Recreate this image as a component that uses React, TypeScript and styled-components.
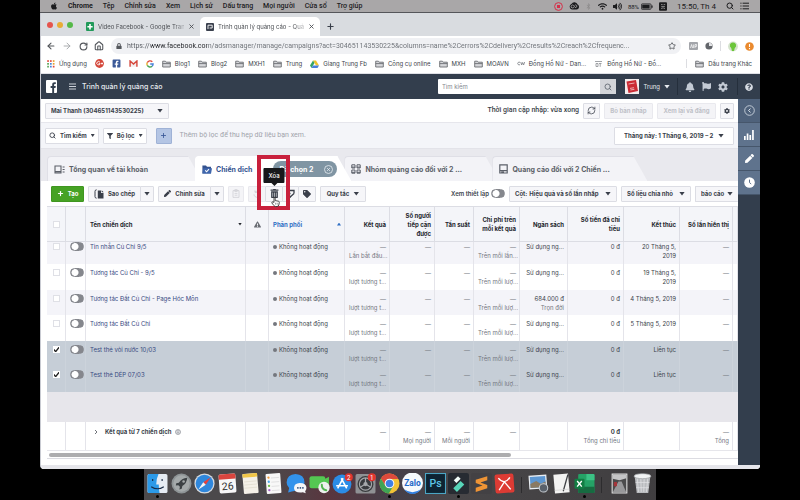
import React from "react";
import styled, { createGlobalStyle, css } from "styled-components";
import {
  FaApple, FaBell, FaBluetoothB, FaCog, FaExclamationTriangle, FaFacebookSquare, FaFilter, FaFlag,
  FaLock, FaPen, FaQuestionCircle, FaTag, FaTrashAlt, FaVolumeUp, FaWifi,
} from "react-icons/fa";
import { ArrowLeft, ArrowRight, House, Plus, RefreshCw, RotateCw, Search, Star, X } from "lucide-react";

const ink = "#3a3f4a";
const navy = "#333e4d";
const line = "#dcdde4";
const roboto = `Roboto, "Liberation Sans", sans-serif`;

const Global = createGlobalStyle`
  *, *::before, *::after { box-sizing: border-box; }
  body { margin: 0; background: #000; }
  body, button, input, select { font-family: Inter, "Liberation Sans", sans-serif; }
  body { font-size: 6px; line-height: 9px; color: ${ink}; }
  button, input, select { font-size: inherit; line-height: inherit; color: inherit; margin: 0; padding: 0; border: 0; background: none; }
  a { color: inherit; text-decoration: none; }
  svg { display: block; flex: none; }
`;

const Screen = styled.div`
  min-height: 100vh;
  padding: 0 5%;
  background: #000;
  overflow: hidden;
  display: flex;
  flex-direction: column;
`;

/* ---------- system menu bar ---------- */

const MenuBar = styled.header`
  height: 13px;
  display: flex;
  align-items: center;
  justify-content: space-between;
  padding: 0 11px 0 10px;
  background: #a9a7a8;
  border-bottom: 1px solid #55565a;
  color: #1c1c1e;
  font-family: ${roboto};
  font-size: 7px;
`;
const MenuGroup = styled.nav`
  display: flex;
  align-items: center;
  gap: 10px;
`;
const MenuItem = styled.button<{ $strong?: boolean }>`
  font-family: inherit;
  font-weight: ${(p) => (p.$strong ? 700 : 500)};
  white-space: nowrap;
`;
const StatusGroup = styled.div`
  display: flex;
  align-items: center;
  gap: 6px;
`;
const Battery = styled.span`
  display: flex;
  align-items: center;
  gap: 2px;
  font-size: 6px;
`;
const Clock = styled.span`
  padding: 0 4px;
  font-size: 8px;
`;

/* ---------- browser window ---------- */

const Window = styled.div`
  background: #e6e6eb;
  border-radius: 0 0 4px 4px;
  overflow: hidden;
  border-left: 1px solid #c9cbd2;
`;
const TabStrip = styled.div`
  height: 23px;
  display: flex;
  align-items: flex-end;
  background: #d9dce0;
  padding-left: 5px;
`;
const Lights = styled.div`
  display: flex;
  gap: 4px;
  align-self: center;
  padding: 0 7px 0 1px;
`;
const Light = styled.span<{ $color: string }>`
  width: 6px;
  height: 6px;
  border-radius: 50%;
  background: ${(p) => p.$color};
`;
const BrowserTab = styled.div<{ $active?: boolean }>`
  height: 19px;
  flex: 0 1 120px;
  min-width: 0;
  display: flex;
  align-items: center;
  gap: 4px;
  padding: 0 5px 0 6px;
  border-radius: 5px 5px 0 0;
  background: ${(p) => (p.$active ? "#fff" : "transparent")};
  color: #4a4d52;
`;
const TabTitle = styled.button`
  flex: 1;
  min-width: 0;
  white-space: nowrap;
  text-align: left;
  mask-image: linear-gradient(90deg, #000 88%, rgba(0, 0, 0, 0.3));
`;
const IconButton = styled.button`
  display: flex;
  align-items: center;
  justify-content: center;
`;
const NewTab = styled(IconButton)`
  height: 19px;
  padding: 0 6px;
`;
const AddressRow = styled.div`
  height: 20px;
  display: flex;
  align-items: center;
  background: #fff;
  padding: 0 6px 0 5px;
`;
const NavButtons = styled.div`
  display: flex;
  gap: 6px;
  padding-right: 7px;
  color: #55585d;
`;
const NavButton = styled(IconButton)`
  width: 10px;
  height: 10px;
`;
const Omnibox = styled.div`
  flex: 1;
  min-width: 0;
  height: 16px;
  border-radius: 8px;
  background: #f0f1f4;
  display: flex;
  align-items: center;
  gap: 5px;
  padding: 0 5px;
  color: #55585d;
`;
const UrlInput = styled.input`
  flex: 1;
  min-width: 0;
  font-family: ${roboto};
  font-size: 7px;
  color: transparent;
  background: linear-gradient(90deg, #55595f 24px, #202226 24px, #202226 80px, #6b6f75 80px);
  background-clip: text;
`;
const Extensions = styled.div`
  display: flex;
  align-items: center;
  gap: 7px;
  padding-left: 8px;
`;
const VRule = styled.span<{ $color: string; $h: number }>`
  width: 1px;
  height: ${(p) => p.$h}px;
  background: ${(p) => p.$color};
`;
const Bookmarks = styled.nav`
  height: 18px;
  display: flex;
  align-items: center;
  justify-content: space-between;
  gap: 6px;
  padding: 0 8px 2px 6px;
  background: #fff;
  white-space: nowrap;
  border-bottom: 1px solid #dfe0e6;
`;
const BookmarkList = styled.div`
  display: flex;
  align-items: center;
  gap: 8px;
`;
const Bookmark = styled.a`
  display: flex;
  align-items: center;
  gap: 4px;
`;

/* ---------- ads manager header ---------- */

const AppBar = styled.header`
  height: 25px;
  display: flex;
  align-items: center;
  background: ${navy};
  color: #e8ebf0;
  padding-left: 5px;
`;
const AppTitle = styled.h1`
  flex: 1;
  margin: 0;
  font-size: 7px;
  line-height: 9px;
  font-weight: 500;
`;
const Hamburger = styled(IconButton)`
  padding: 0 6px 0 12px;
`;
const SearchForm = styled.form`
  width: 25%;
  height: 15px;
  display: flex;
  border-radius: 1px;
  overflow: hidden;
  background: #fff;
  color: #606770;
`;
const SearchInput = styled.input`
  flex: 1;
  min-width: 0;
  padding: 0 4px;
  &::placeholder { color: #85888f; opacity: 1; }
`;
const SearchSubmit = styled(IconButton)`
  width: 16px;
  background: #d3d5d9;
`;
const UserButton = styled.button`
  display: flex;
  align-items: center;
  gap: 4px;
  padding: 0 7px 0 9px;
`;
const AppIcons = styled.div`
  display: flex;
  align-items: center;
  gap: 7px;
  padding: 0 9px 0 7px;
  color: #c3cad4;
`;
const HelpCell = styled.div`
  width: 22px;
  display: flex;
  justify-content: center;
  color: #d6dbe2;
`;

/* ---------- work area ---------- */

const Work = styled.div`
  display: flex;
  align-items: stretch;
  background: #fff;
  border-bottom: 4px solid #e6e6eb;
`;
const Main = styled.main`
  flex: 1;
  min-width: 0;
`;
const Side = styled.aside`
  width: 22px;
  background: ${navy};
  display: flex;
  flex-direction: column;
`;
const SideButton = styled(IconButton)<{ $dim?: boolean }>`
  height: 24px;
  background: ${(p) => (p.$dim ? "#4f627b" : "#5f738d")};
  border-bottom: 1px solid #46566b;
  color: #fff;
`;
const Bar = styled.div<{ $tint?: boolean }>`
  display: flex;
  align-items: center;
  justify-content: space-between;
  height: ${(p) => (p.$tint ? 26 : 24)}px;
  padding: 0 4px;
  background: ${(p) => (p.$tint ? "#f4f5f9" : "#fff")};
  border-bottom: 1px solid ${(p) => (p.$tint ? "#e3e3e9" : "#e6e6ec")};
`;
const BarGroup = styled.div`
  display: flex;
  align-items: center;
  gap: 4px;
`;
const boxed = css`
  height: 16px;
  border: 1px solid ${line};
  border-radius: 1px;
  background: #f6f6f9;
  font-weight: 700;
  white-space: nowrap;
`;
const BoxButton = styled.button<{ $w?: number; $tone?: "white" | "green" | "blue" }>`
  ${boxed}
  display: flex;
  align-items: center;
  justify-content: center;
  gap: 4px;
  min-width: ${(p) => p.$w ?? 16}px;
  padding: 0 3px;
  ${(p) => p.$tone === "white" && "background:#fff;"}
  ${(p) => p.$tone === "green" && "background:#46a224;border-color:#3f9620;color:#fff;"}
  ${(p) => p.$tone === "blue" && "background:#b4c5e4;border-color:#9fb2d6;color:#3b5998;"}
  &:disabled { color: #bfc1c8; background: #f4f4f7; border-color: #e9e9ee; }
`;
const SelectBox = styled.label<{ $w: number; $white?: boolean; $open?: boolean }>`
  ${boxed}
  width: ${(p) => p.$w}px;
  display: flex;
  align-items: center;
  gap: 2px;
  padding: 0 5px;
  ${(p) => p.$white && "background:#fff;height:18px;padding:0 9px;"}
  ${(p) => p.$open && "border-right:0;"}
`;
const Select = styled.select`
  appearance: none;
  flex: 1;
  min-width: 0;
  font-weight: 700;
  overflow: hidden;
`;
const Caret = styled.span<{ $up?: boolean }>`
  flex: none;
  width: 6px;
  height: 4px;
  background: currentColor;
  clip-path: ${(p) => (p.$up ? "polygon(0 100%, 50% 0, 100% 100%)" : "polygon(0 0, 100% 0, 50% 100%)")};
`;
const SmallCaret = styled(Caret)`
  width: 4px;
  height: 3px;
`;
const Hint = styled.span`
  padding-left: 4px;
  font-family: ${roboto};
  font-size: 7px;
  color: #a0a3ab;
`;
const Updated = styled.span`
  font-family: ${roboto};
  font-size: 7px;
  font-weight: 500;
`;

const LevelTabs = styled.div`
  display: flex;
  padding: 7px 0 0 6px;
  background: #e9e9ee;
`;
const LevelTab = styled.div<{ $active?: boolean }>`
  flex: 0 1 155px;
  height: 25px;
  display: flex;
  align-items: center;
  padding: 0 14px 0 6px;
  border-radius: 4px 0 0 0;
  clip-path: polygon(0 0, calc(100% - 14px) 0, 100% 100%, 0 100%);
  background: ${(p) => (p.$active ? "#fff" : "#f3f3f7")};
  border-top: 1px solid ${(p) => (p.$active ? "#fff" : "#dfdfe6")};
  border-left: 1px solid ${(p) => (p.$active ? "#fff" : "#dfdfe6")};
  color: ${(p) => (p.$active ? "#33528f" : "#5b5f68")};
  position: relative;
  z-index: ${(p) => (p.$active ? 1 : 0)};
  & + & { margin-left: -7px; }
`;
const LevelButton = styled.button`
  display: flex;
  align-items: center;
  gap: 4px;
  font-size: 7px;
  font-weight: 700;
  white-space: nowrap;
`;
const Pill = styled.span`
  flex: none;
  margin-left: 21px;
  width: 64px;
  height: 16px;
  border-radius: 8px;
  background: #8095a3;
  color: #fff;
  display: flex;
  align-items: center;
  justify-content: space-between;
  padding: 0 4px 0 6px;
  font-size: 7px;
  font-weight: 700;
`;
const Panel = styled.section`
  margin-left: 6px;
`;
const Toolbar = styled.div`
  height: 25px;
  display: flex;
  align-items: center;
  justify-content: space-between;
  padding-left: 4px;
`;
const Split = styled.div`
  display: flex;
  & > * + * { margin-left: -1px; }
`;
const DeleteSpot = styled.div`
  position: relative;
  z-index: 3;
`;
const Tooltip = styled.span`
  position: absolute;
  left: 50%;
  bottom: 100%;
  transform: translateX(-50%);
  margin-bottom: 3px;
  padding: 3px 5px;
  border-radius: 1px;
  background: #17181b;
  color: #fff;
  font-weight: 500;
  &::after {
    content: "";
    position: absolute;
    left: 50%;
    top: 100%;
    margin-left: -3px;
    border: 3px solid transparent;
    border-bottom: 0;
    border-top-color: #17181b;
  }
`;
const Marker = styled.span`
  position: absolute;
  inset: -31px -7px -8px -8px;
  border: 4px solid #c8203c;
  pointer-events: none;
`;
const Pointer = styled.svg`
  position: absolute;
  left: 6px;
  top: 11px;
`;
const SwitchLabel = styled.label`
  display: flex;
  align-items: center;
  gap: 2px;
  font-weight: 600;
`;
const Switch = styled.input`
  appearance: none;
  display: block;
  width: 14px;
  height: 9px;
  border-radius: 5px;
  background: radial-gradient(circle at 4px 50%, #fff 3px, #85878d 4px);
  border: 1px solid #85878d;
`;
const Check = styled.input`
  appearance: none;
  display: block;
  width: 7px;
  height: 7px;
  margin: 1px auto 0;
  border: 1px solid #dfe0e6;
  background: #fff;
  &:checked {
    border-color: #fff;
    background: #fff
      url("data:image/svg+xml,%3Csvg xmlns='http://www.w3.org/2000/svg' viewBox='0 0 8 8'%3E%3Cpath d='M1 4l2 2.4L7 1.4' fill='none' stroke='%23222' stroke-width='1.5'/%3E%3C/svg%3E")
      center / 7px no-repeat;
  }
`;

const Grid = styled.table`
  width: 100%;
  table-layout: fixed;
  border-collapse: separate;
  border-spacing: 0;
  white-space: nowrap;
`;
const Col = styled.col<{ $w?: number }>`
  width: ${(p) => (p.$w ? `${p.$w}px` : "auto")};
`;
const Th = styled.th<{ $left?: boolean; $blue?: boolean }>`
  height: 36px;
  padding: 0 3px 0 4px;
  background: #f4f5f9;
  border-top: 1px solid ${line};
  border-bottom: 1px solid ${line};
  border-right: 1px solid ${line};
  white-space: normal;
  text-align: ${(p) => (p.$left ? "left" : "right")};
  color: ${(p) => (p.$blue ? "#2f6fc4" : "#23262d")};
  font-weight: 700;
`;
const HeadLine = styled.span`
  display: flex;
  align-items: center;
  justify-content: space-between;
`;
const Row = styled.tr<{ $kind: "clip" | "odd" | "even" | "total"; $selected?: boolean }>`
  & > td {
    height: ${(p) => ({ clip: 22, odd: 26, even: 25, total: 28 }[p.$kind])}px;
    padding: ${(p) => (p.$kind === "clip" ? 0 : p.$kind === "total" ? 5 : 4)}px 3px 0 4px;
    background: ${(p) => (p.$selected ? "#c6ced7" : p.$kind === "even" || p.$kind === "clip" ? "#f4f4f9" : "#fff")};
    border-right: 1px solid ${(p) => (p.$selected ? "#ccd3db" : "#e4e4ea")};
    vertical-align: top;
    text-align: right;
  }
`;
const LeftCell = styled.td`
  && { text-align: left; }
`;
const Sub = styled.span`
  display: block;
  color: #74777f;
`;
const Dash = styled.span`
  color: #74777f;
`;
const NameLink = styled.a`
  color: #37497f;
`;
const State = styled.span`
  display: flex;
  align-items: center;
  gap: 2px;
`;
const Dot = styled.span`
  width: 4px;
  height: 4px;
  border-radius: 50%;
  background: #74777e;
`;
const Filler = styled.td`
  height: 30px;
  background: #e7e6eb;
`;
const TotalName = styled.span`
  display: flex;
  align-items: center;
  gap: 4px;
  padding-left: 3px;
  font-weight: 700;
`;
const Expand = styled(IconButton)`
  width: 6px;
  margin-right: 2px;
  color: #70737a;
`;
const Wrap = styled.span`
  white-space: normal;
`;
const Scroll = styled.div`
  height: 9px;
  padding: 2px 0 0 2px;
  border-top: 1px solid #e6e6eb;
  border-bottom: 1px solid #dcdce2;
  margin-bottom: 6px;
`;
const Thumb = styled.div`
  width: 67%;
  height: 4px;
  border-radius: 2px;
  background: #adadaf;
`;

/* ---------- dock ---------- */

const DockArea = styled.footer`
  flex: 1;
  display: flex;
  justify-content: center;
  align-items: flex-end;
`;
const Dock = styled.div`
  width: 71%;
  height: 31px;
  display: flex;
  align-items: center;
  padding: 0 2px;
  background: linear-gradient(90deg, #4b494b 0, #4b494b 24%, #59363f 36%, #463f49 48%, #484648 62%, #403e40 100%);
`;
const DockSlot = styled.button`
  flex: 1;
  display: flex;
  flex-direction: column;
  align-items: center;
  gap: 1px;
  padding-top: 2px;
`;
const DockDot = styled.span<{ $on?: boolean }>`
  width: 3px;
  height: 3px;
  border-radius: 50%;
  background: ${(p) => (p.$on ? "#000" : "transparent")};
`;
const DockRule = styled.span`
  width: 1px;
  height: 16px;
  margin: 0 5px;
  background: #2d2c2e;
`;

/* ---------- small drawings ---------- */

const Folder = () => (
  <svg width="9" height="8" viewBox="0 0 9 8" fill="#d5d6d9" stroke="#6b6e73" strokeWidth="0.9">
    <path d="M0.7 7V1.2H3.4L4.2 2.2H8.3V7Z" />
    <path d="M0.7 3.6H8.3" />
  </svg>
);
const Sheets = () => (
  <svg width="8" height="9" viewBox="0 0 8 9">
    <rect width="8" height="9" rx="1" fill="#229a5a" />
    <path d="M4 2V7.4M1.4 4.7H6.6" stroke="#fff" strokeWidth="1.6" />
  </svg>
);
const AdsMark = () => (
  <svg width="8" height="8" viewBox="0 0 8 8">
    <rect width="8" height="8" rx="1" fill="#3b414e" />
    <path d="M2 6V2.2H6.2V5H3.6" fill="none" stroke="#fff" strokeWidth="0.9" />
  </svg>
);
const Apps = () => (
  <svg width="8" height="8" viewBox="0 0 8 8">
    {["#e0483c", "#e0483c", "#e8a22b", "#58a557", "#4a83d8", "#e8a22b", "#58a557", "#4a83d8", "#e0483c"].map((c, i) => (
      <rect key={i} x={(i % 3) * 2.8 + 0.2} y={Math.floor(i / 3) * 2.8 + 0.2} width="1.7" height="1.7" fill={c} />
    ))}
  </svg>
);
const GooglePlus = () => (
  <svg width="9" height="9" viewBox="0 0 9 9">
    <circle cx="4.5" cy="4.5" r="4.4" fill="#d4483b" />
    <path d="M5 3.3A1.7 1.7 0 1 0 5.2 4.6H3.6M6.1 4.5H8M7 3.5V5.5" fill="none" stroke="#fff" strokeWidth="0.9" />
  </svg>
);
const Gmail = () => (
  <svg width="9" height="7" viewBox="0 0 9 7">
    <rect x="0.5" y="0.4" width="8" height="6.3" fill="#f3eeee" />
    <path d="M1.1 6.7V1L4.5 4L7.9 1V6.7" fill="none" stroke="#d6473b" strokeWidth="1.4" />
  </svg>
);
const GoogleG = () => (
  <svg width="8" height="8" viewBox="0 0 8 8" fill="none" strokeWidth="1.4">
    <path d="M6.3 1.8A3.1 3.1 0 0 0 1.3 2.6" stroke="#e0483c" />
    <path d="M1.3 2.6A3.1 3.1 0 0 0 1.3 5.4" stroke="#e8b02b" />
    <path d="M1.3 5.4A3.1 3.1 0 0 0 6.1 6.2" stroke="#4aa557" />
    <path d="M6.1 6.2A3.1 3.1 0 0 0 7.1 4H4.2" stroke="#4a83d8" />
  </svg>
);
const Drive = () => (
  <svg width="9" height="8" viewBox="0 0 9 8">
    <path d="M3 0.5H6L9 5.5H6Z" fill="#f2c32c" />
    <path d="M3 0.5L0 5.5L1.5 8L4.5 3Z" fill="#35a366" />
    <path d="M3 5.5H9L7.5 8H1.5Z" fill="#4a7fdc" />
  </svg>
);
const Watch = () => (
  <svg width="9" height="8" viewBox="0 0 9 8" fill="none" stroke="#8b8e93" strokeWidth="0.8">
    <path d="M1 1.5H8M2 3.5H4V6.5H2ZM5 3.5H7.5M6.2 3.5V6.8" />
  </svg>
);
const CwMark = () => (
  <svg width="8" height="5" viewBox="0 0 8 5" fill="none" stroke="#85888d" strokeWidth="0.9">
    <path d="M3 1.4A1.4 1.4 0 1 0 3 3.6M3.8 1L4.6 4L5.6 1.5L6.6 4L7.6 1" />
  </svg>
);
const Record = () => (
  <svg width="9" height="9" viewBox="0 0 9 9">
    <circle cx="4.5" cy="4.5" r="3.9" fill="none" stroke="#d5304a" />
    <rect x="3" y="3" width="3" height="3" fill="#d5304a" />
  </svg>
);
const Cloud = () => (
  <svg width="10" height="8" viewBox="0 0 10 8">
    <path d="M3 7.5A2.9 2.9 0 0 1 2.4 2A3.4 3.4 0 0 1 8.6 2.6A2.6 2.6 0 0 1 7.6 7.5Z" fill="#1c1c1e" />
    <path d="M5 4.8A1.5 1.5 0 1 1 4.4 3.3L6 5.4A1.3 1.3 0 1 0 5.6 3.4" fill="none" stroke="#a9a7a8" strokeWidth="0.8" />
  </svg>
);
const BatteryIcon = () => (
  <svg width="12" height="7" viewBox="0 0 12 7">
    <rect x="0.4" y="0.9" width="9.6" height="5.4" rx="0.8" fill="none" stroke="#1c1c1e" strokeWidth="0.8" />
    <rect x="1.2" y="1.7" width="7.4" height="3.8" fill="#1c1c1e" />
    <path d="M11 2.4V4.8" stroke="#1c1c1e" strokeWidth="1.2" />
  </svg>
);
const InputSource = () => (
  <svg width="8" height="9" viewBox="0 0 8 9">
    <rect y="0.3" width="8" height="8.4" rx="1" fill="#1c1c1e" />
    <path d="M2 2.5H3.6M4.6 2.5H6.2M2.2 4.4H6M4 4.4V7M2.6 5.8V7M5.5 5.8V7" stroke="#a9a7a8" strokeWidth="0.7" />
  </svg>
);
const ListIcon = () => (
  <svg width="9" height="8" viewBox="0 0 9 8" stroke="#1c1c1e">
    <path d="M2.6 1.2H9M2.6 4H9M2.6 6.8H9M0.4 1.2H1.5M0.4 4H1.5M0.4 6.8H1.5" />
  </svg>
);
const Lines = () => (
  <svg width="7" height="7" viewBox="0 0 7 7" stroke="#dfe3e9">
    <path d="M0 1H7M0 3.5H7M0 6H7" strokeWidth="0.9" />
  </svg>
);
const FbLogo = () => (
  <svg width="11" height="13" viewBox="0 0 11 13">
    <rect width="11" height="13" rx="1" fill="#fff" />
    <path d="M6.2 13V8H4.6V6.1H6.2V4.6C6.2 3 7.2 2.2 8.6 2.2H9.8V4H8.9C8.3 4 8.1 4.3 8.1 4.8V6.1H9.8L9.5 8H8.1V13Z" fill={navy} />
  </svg>
);
const Avatar = () => (
  <svg width="14" height="15" viewBox="0 0 14 15">
    <rect width="14" height="15" fill="#f3ecec" />
    <path d="M1.5 2.5L11 1L13 12L3.5 14Z" fill="#cb2a33" />
    <path d="M3.5 5L9.5 4M5 9.4L9 8.7M5.4 11L9.4 10.3" stroke="#f3c9c9" strokeWidth="0.8" />
  </svg>
);
const CopyIcon = () => (
  <svg width="10" height="10" viewBox="0 0 10 10">
    <path d="M2.6 0.8Q1 0.8 1 2.4V7.6Q1 9.2 2.6 9.2" fill="none" stroke={ink} strokeWidth="1" />
    <path d="M3.8 1.5H7V4H9.5V9.5H3.8Z" fill={ink} />
    <path d="M7.7 1.3L9.7 3.3H7.7Z" fill={ink} />
  </svg>
);
const PasteIcon = () => (
  <svg width="8" height="9" viewBox="0 0 8 9" fill="none" stroke="#d2d3d8" strokeWidth="0.9">
    <path d="M1 1.6H7V8.4H1ZM2.8 0.7H5.2V2.4H2.8ZM2.6 4.4H5.4M2.6 6.2H5.4" />
  </svg>
);
const UndoIcon = () => (
  <svg width="8" height="8" viewBox="0 0 8 8" fill="none" stroke="#d2d3d8" strokeWidth="1">
    <path d="M2 2A3 3 0 1 1 1 4.4M2 0.4V2.4H4" />
  </svg>
);
const ExportIcon = () => (
  <svg width="9" height="9" viewBox="0 0 9 9" fill="none" stroke={ink} strokeWidth="1.3">
    <path d="M1 1.5H8V4.5M1 1.5V4.5H4.5M4.2 8L8 4.5M5 8.2H3.6V6.4" />
  </svg>
);
const OverviewIcon = () => (
  <svg width="11" height="9" viewBox="0 0 11 9" fill="none" stroke="#5b5f68" strokeWidth="1.1">
    <path d="M1 1H7V8H1ZM1 6.6H7M8.6 2H10.6M8.6 4.5H10.6M8.6 7H10.6" />
  </svg>
);
const CampaignIcon = () => (
  <svg width="10" height="9" viewBox="0 0 10 9">
    <path d="M0.4 8.6V0.6H4L5 1.8H9V8.6Z" fill="#33528f" />
    <path d="M1.4 3.2H10L9 8.6H0.4Z" fill="#3f66ad" />
    <path d="M3.2 5.4L4.6 6.8L7 4.2" fill="none" stroke="#fff" strokeWidth="1.1" />
  </svg>
);
const AdSetIcon = () => (
  <svg width="10" height="10" viewBox="0 0 10 10" fill="none" stroke="#5b5f68" strokeWidth="1">
    <path d="M0.8 0.8H4V4H0.8ZM6 0.8H9.2V4H6ZM0.8 6H4V9.2H0.8ZM6 6H9.2V9.2H6ZM0.8 3.1H4M6 3.1H9.2M0.8 8.3H4M6 8.3H9.2" />
  </svg>
);
const AdIcon = () => (
  <svg width="9" height="10" viewBox="0 0 9 10" fill="none" stroke="#5b5f68" strokeWidth="1.2">
    <path d="M0.8 0.8H8.2V9H0.8ZM0.8 6.7H8.2M2.2 8H5" />
  </svg>
);
const CircleX = () => (
  <svg width="9" height="9" viewBox="0 0 9 9" fill="none" stroke="#e9eef2" strokeWidth="0.8">
    <circle cx="4.5" cy="4.5" r="4" />
    <path d="M3.1 3.1L5.9 5.9M5.9 3.1L3.1 5.9" />
  </svg>
);
const Collapse = () => (
  <svg width="11" height="11" viewBox="0 0 11 11" fill="none" stroke="#dbe2ea">
    <circle cx="5.5" cy="5.5" r="4.8" strokeWidth="0.8" />
    <path d="M6.5 3.6L4.5 5.5L6.5 7.4" />
  </svg>
);
const Bars = () => (
  <svg width="10" height="11" viewBox="0 0 10 11" fill="#fff">
    <path d="M0 7H1.7V11H0ZM2.7 4.5H4.4V11H2.7ZM5.4 6H7.1V11H5.4ZM8.1 1H9.8V11H8.1Z" />
  </svg>
);
const ClockIcon = () => (
  <svg width="11" height="11" viewBox="0 0 11 11">
    <circle cx="5.5" cy="5.5" r="5.3" fill="#fff" />
    <path d="M5.5 2.6V5.6L7.2 7" fill="none" stroke="#5f738d" />
  </svg>
);
const Chevron = () => (
  <svg width="4" height="6" viewBox="0 0 4 6" fill="none" stroke="currentColor">
    <path d="M1 1L3 3L1 5" />
  </svg>
);
const Info = () => (
  <svg width="6" height="6" viewBox="0 0 6 6">
    <circle cx="3" cy="3" r="2.5" fill="#dfe0e4" stroke="#8c8f96" strokeWidth="0.7" />
    <path d="M3 2.6V4.4M3 1.4V2" stroke="#70737a" strokeWidth="0.7" />
  </svg>
);
const Hand = () => (
  <Pointer width="9" height="10" viewBox="0 0 9 10">
    <path
      d="M3 5.4V1.2Q3 0.5 3.6 0.5T4.2 1.2V3.6L7.4 4.2Q8.4 4.4 8.3 5.4L7.8 8Q7.5 9.5 6 9.5H4.6Q3.6 9.5 3 8.7L0.9 6Q0.5 5.3 1.2 5T3 5.4Z"
      fill="#fff" stroke="#222" strokeWidth="0.8"
    />
    <path d="M4.6 5.8V7.6M6.2 5.8V7.6" stroke="#555" strokeWidth="0.6" />
  </Pointer>
);

const dockArt: Record<string, React.ReactNode> = {
  Finder: (
    <>
      <rect x="0.5" y="1" width="19" height="18" rx="1.5" fill="#e6ecf3" />
      <path d="M0.5 2.5Q0.5 1 2 1H11Q8.6 6 8.8 11H11.2Q11.2 15 12 19H2Q0.5 19 0.5 17.5Z" fill="#2c9ae8" />
      <path d="M5.4 5.6V7.6M14.4 5.6V7.6M4 13Q10 17 16 13" fill="none" stroke="#1b2c46" strokeWidth="1.1" />
    </>
  ),
  Launchpad: (
    <>
      <circle cx="10" cy="10" r="9.5" fill="#8e9496" />
      <circle cx="10" cy="10" r="7.8" fill="#a4a9aa" />
      <path d="M15.5 4.5Q10 5 7.5 9.3L5 9.8L4.6 12L7 11.6L8.5 13.2L8 15.6L10.2 15L10.8 12.4Q15 10 15.5 4.5Z" fill="#3c4144" />
      <circle cx="12" cy="8" r="1.2" fill="#a4a9aa" />
    </>
  ),
  Safari: (
    <>
      <circle cx="10" cy="10" r="9.6" fill="#d5dadf" />
      <circle cx="10" cy="10" r="8.4" fill="#2f87dc" />
      <path d="M16 4L11.2 11.2L8.8 8.8Z" fill="#e7413b" />
      <path d="M4 16L11.2 11.2L8.8 8.8Z" fill="#f4f5f6" />
    </>
  ),
  Calendar: (
    <g transform="rotate(-4 10 10)">
      <rect x="2" y="1" width="16" height="18" rx="1.5" fill="#f7f7f7" />
      <path d="M2 2.5Q2 1 3.5 1H16.5Q18 1 18 2.5V5.8H2Z" fill="#d9453e" />
      <text x="10" y="16" textAnchor="middle" fontSize="10" fontFamily="Roboto, sans-serif" fill="#333">26</text>
    </g>
  ),
  Notes: (
    <g transform="rotate(-5 10 10)">
      <rect x="3" y="0.5" width="14" height="19" rx="1" fill="#f4f1e8" />
      <path d="M3 0.5H17V4H3Z" fill="#f0c648" />
      <path d="M4 8H16M4 11H16M4 14H16" stroke="#ddd8ca" strokeWidth="0.6" />
    </g>
  ),
  Reminders: (
    <g transform="rotate(-4 10 10)">
      <rect x="3" y="0.5" width="14" height="19" rx="1" fill="#f8f8f8" />
      <circle cx="5.6" cy="4" r="1.1" fill="#f09a37" />
      <circle cx="5.6" cy="8" r="1.1" fill="#4aa7ea" />
      <circle cx="5.6" cy="12" r="1.1" fill="#6fc04f" />
      <circle cx="5.6" cy="16" r="1.1" fill="#a861c9" />
      <path d="M8 4.6H15.5M8 8.6H15.5M8 12.6H15.5M8 16.6H15.5" stroke="#d2d2d4" strokeWidth="0.6" />
    </g>
  ),
  Messages: (
    <>
      <path d="M9 1Q17.5 1.4 17.6 9Q17.4 16.6 9 16.8Q5.8 17.2 2 18.6L3 14.4Q0.6 12 0.6 9Q1 1.4 9 1Z" fill="#3393ec" />
      <path d="M13 9.5Q19.4 9.6 19.5 14Q19.4 16.4 18.2 17.2L18.8 19.4L16 18.4Q8 19.4 7.6 14.2Q8 9.7 13 9.5Z" fill="#f5f6f8" />
      <path d="M10.6 14.2H12M13 14.2H14.4M15.4 14.2H16.8" stroke="#3f5d86" strokeWidth="1.5" />
    </>
  ),
  FaceTime: (
    <>
      <rect x="0.5" y="3" width="15" height="11.5" rx="2" fill="#54c752" />
      <path d="M13 7L19 3.6V13.8L13 10.6Z" fill="#54c752" />
      <circle cx="14.3" cy="13.8" r="5.4" fill="#eef0ee" />
      <path d="M12.2 11.2Q12 15.6 16.4 16.4" fill="none" stroke="#54b552" strokeWidth="1.9" strokeLinecap="round" />
    </>
  ),
  "App Store": (
    <>
      <circle cx="9.5" cy="10.5" r="9" fill="#2b8ce6" />
      <path d="M10.6 5L5.4 14.6M8.8 5L14 14.6M4 12.2H15.2" stroke="#fff" strokeWidth="1.5" fill="none" />
      <circle cx="16" cy="4" r="3.8" fill="#e1352f" />
      <text x="16" y="6.2" textAnchor="middle" fontSize="6" fontFamily="Roboto, sans-serif" fill="#fff">2</text>
    </>
  ),
  Settings: (
    <>
      <rect x="0.5" y="1" width="19" height="18.5" rx="1.5" fill="#8f9194" />
      <circle cx="10" cy="10.5" r="7.6" fill="#393b3e" />
      <circle cx="10" cy="10.5" r="5.8" fill="none" stroke="#a6a8ab" strokeWidth="1.1" />
      <path d="M10 10.5V4.8M10 10.5L5 13.6M10 10.5L15 13.6" stroke="#a6a8ab" strokeWidth="1.2" />
      <circle cx="10" cy="10.5" r="2" fill="#a6a8ab" />
      <circle cx="16" cy="4" r="3.8" fill="#e1352f" />
      <text x="16" y="6.2" textAnchor="middle" fontSize="6" fontFamily="Roboto, sans-serif" fill="#fff">1</text>
    </>
  ),
  Chrome: (
    <>
      <circle cx="10" cy="10" r="9.5" fill="#f3c336" />
      <path d="M1.8 5.2A9.5 9.5 0 0 1 18.4 5.6H10L5.8 12Z" fill="#dd4a3c" />
      <path d="M1.8 5.2A9.5 9.5 0 0 0 9.4 19.5L13.6 12.4L6.2 12.4Z" fill="#3fa455" />
      <circle cx="10" cy="10" r="4.6" fill="#f6f6f6" />
      <circle cx="10" cy="10" r="3.6" fill="#3f7fe4" />
    </>
  ),
  Zalo: (
    <>
      <circle cx="10" cy="9.5" r="10" fill="#f6f9fc" />
      <path d="M2 15.5Q10 21 18 15.5Q15 20 10 20Q5 20 2 15.5Z" fill="#2f7fe0" />
      <text x="10" y="12.6" textAnchor="middle" fontSize="8" fontWeight="700" fontFamily="Roboto, sans-serif" fill="#1e68c8">Zalo</text>
    </>
  ),
  Photoshop: (
    <>
      <rect x="0.5" y="0.5" width="19" height="19" fill="#0e2433" stroke="#4ba5c4" />
      <text x="10" y="13.6" textAnchor="middle" fontSize="10" fontWeight="500" fontFamily="Roboto, sans-serif" fill="#5fc6e6">Ps</text>
    </>
  ),
  Filmora: (
    <>
      <rect width="20" height="20" rx="2" fill="#272b32" />
      <path d="M9.5 3L12 5.5L8 9.5L5.5 7Z" fill="#f4fffb" />
      <path d="M5 14.5L12 7.5L15.5 11L8.5 18Z" fill="#58d6b9" />
    </>
  ),
  Sublime: (
    <>
      <rect width="20" height="20" rx="2" fill="#434144" />
      <path d="M4.5 6.5L15.5 3V7L9 9L15.5 11.4V14.5L4.5 18V14L11 12L4.5 9.6Z" fill="#ef9435" />
    </>
  ),
  XMind: (
    <g transform="rotate(-4 10 10)">
      <rect x="1" y="1" width="18" height="18" rx="2" fill="#dd3b34" />
      <path d="M4.5 4.5Q10 12 15.5 4.5M4.5 16L10 8.4L15.5 16" fill="none" stroke="#fff" strokeWidth="1.3" />
    </g>
  ),
  Preview: (
    <g transform="rotate(-4 10 10)">
      <rect x="1" y="2" width="17" height="13" fill="#e9edf2" />
      <rect x="2.2" y="3.2" width="14.6" height="10.6" fill="#5d97d2" />
      <path d="M2.2 10L8 7.4L12 10.4L16.8 8.6V13.8H2.2Z" fill="#8a7a63" />
      <circle cx="14.5" cy="14.5" r="4" fill="#59616b" stroke="#c6ccd2" strokeWidth="1" />
    </g>
  ),
  TextEdit: (
    <g transform="rotate(-5 10 10)">
      <rect x="3" y="1" width="14" height="18" fill="#f3f3f2" />
      <path d="M16.8 2L11 17.5" stroke="#3e4044" strokeWidth="1.2" />
      <path d="M3 16H17" stroke="#cfcfcf" strokeWidth="0.6" />
    </g>
  ),
  Excel: (
    <>
      <rect x="4" y="1" width="15.5" height="18" rx="1" fill="#25a266" />
      <path d="M11.8 1H18.5Q19.5 1 19.5 2V7H11.8Z" fill="#3cc285" />
      <path d="M4 13H19.5V18Q19.5 19 18.5 19H5Q4 19 4 18Z" fill="#176b41" />
      <rect x="0.5" y="5.5" width="9.5" height="9.5" rx="1" fill="#127d43" />
      <path d="M3 7.6L7.4 13M7.4 7.6L3 13" stroke="#fff" strokeWidth="1.3" />
    </>
  ),
  Photo: (
    <>
      <rect x="2.5" y="0.5" width="15" height="19" fill="#e6e6e6" />
      <rect x="3.5" y="1.5" width="13" height="17" fill="#4b4b4c" />
      <path d="M3.5 18.5L9 8H12L16.5 18.5Z" fill="#98989a" />
      <path d="M3.5 1.5H16.5V5L10 7L3.5 5.4Z" fill="#c5c5c6" />
      <rect x="4.6" y="8.6" width="3" height="4" fill="#a5353a" />
    </>
  ),
  Trash: (
    <>
      <path d="M2.5 2.5L4.5 19H15.5L17.5 2.5Z" fill="#b9bbbe" />
      <path d="M5 5L6.2 18M8.4 5L8.8 18M11.6 5L11.2 18M15 5L13.8 18M3.4 9H16.6M4 14H16" stroke="#e2e3e5" strokeWidth="0.7" />
      <ellipse cx="10" cy="3" rx="8" ry="2.4" fill="#f2f3f4" stroke="#a1a3a6" strokeWidth="0.7" />
    </>
  ),
};
const running = ["Finder", "Chrome", "Filmora", "Excel"];
const dockGroups = [
  ["Finder", "Launchpad", "Safari", "Calendar", "Notes", "Reminders", "Messages", "FaceTime", "App Store", "Settings", "Chrome", "Zalo", "Photoshop", "Filmora", "Sublime", "XMind"],
  ["Preview", "TextEdit", "Excel"],
  ["Photo", "Trash"],
];

/* ---------- data ---------- */

const menus = ["Chrome", "Tệp", "Chỉnh sửa", "Xem", "Lịch sử", "Dấu trang", "Mọi người", "Cửa sổ", "Trợ giúp"];

const bookmarks: [React.ReactNode, string][] = [
  [<Apps />, "Ứng dụng"],
  [<GooglePlus />, ""],
  [<FaFacebookSquare size={9} color="#3b5998" />, ""],
  [<Gmail />, ""],
  [<GoogleG />, ""],
  [<Folder />, "Blog1"],
  [<Folder />, "Blog2"],
  [<Folder />, "MXH1"],
  [<Folder />, "Trung"],
  [<Drive />, "Giang Trung Fb"],
  [<Folder />, "Công cụ online"],
  [<Folder />, "MXH"],
  [<Folder />, "MOAVN"],
  [<CwMark />, "Đồng Hồ Nữ - Dan..."],
  [<Watch />, "Đồng Hồ Nữ - Đồ..."],
];

type Campaign = { name: string; result: string; cost: string; budget: string; budgetSub?: string; end: string; on?: boolean };
const campaigns: Campaign[] = [
  { name: "Tin nhắn Củ Chi 9/5", result: "Lần bắt đầu...", cost: "Trên mỗi lần...", budget: "Sử dụng ng...", end: "20 Tháng 5, 2019" },
  { name: "Tương tác Củ Chi - 9/5", result: "lượt tương t...", cost: "Trên mỗi lượ...", budget: "Sử dụng ng...", end: "19 Tháng 5, 2019" },
  { name: "Tương tác Đất Củ Chi - Page Hóc Môn", result: "lượt tương t...", cost: "Trên mỗi lượ...", budget: "684.000 đ", budgetSub: "Trọn đời", end: "4 Tháng 5, 2019" },
  { name: "Tương tác Đất Củ Chi", result: "lượt tương t...", cost: "Trên mỗi lượ...", budget: "Sử dụng ng...", end: "5 Tháng 5, 2019" },
  { name: "Test thẻ vòi nước 10/03", result: "lượt tương t...", cost: "Trên mỗi lượ...", budget: "Sử dụng ng...", end: "Liên tục", on: true },
  { name: "Test thẻ DÉP 07/03", result: "lượt tương t...", cost: "Trên mỗi lượ...", budget: "Sử dụng ng...", end: "Liên tục", on: true },
];
const columns = [19, 20, undefined, 23, 76, 45, 45, 39, 46, 48, 56, 56, 53, 5];

export default function App() {
  return (
    <Screen>
      <Global />
      <MenuBar>
        <MenuGroup aria-label="Menu">
          <FaApple size={8} />
          {menus.map((m, i) => (
            <MenuItem key={m} $strong={i === 0}>{m}</MenuItem>
          ))}
        </MenuGroup>
        <StatusGroup>
          <Record />
          <Cloud />
          <FaBluetoothB size={7} color="#8c8a8b" />
          <FaWifi size={9} />
          <FaVolumeUp size={9} />
          <Battery>88% <BatteryIcon /></Battery>
          <InputSource />
          <Clock>15:50, Th 4</Clock>
          <Search size={8} strokeWidth={3} />
          <ListIcon />
        </StatusGroup>
      </MenuBar>

      <Window>
        <TabStrip>
          <Lights>
            <Light $color="#e5544d" />
            <Light $color="#e8ac35" />
            <Light $color="#55b948" />
          </Lights>
          <BrowserTab>
            <Sheets />
            <TabTitle>Video Facebook - Google Tran</TabTitle>
            <IconButton aria-label="Đóng thẻ"><X size={7} strokeWidth={3} /></IconButton>
          </BrowserTab>
          <BrowserTab $active>
            <AdsMark />
            <TabTitle>Trình quản lý quảng cáo - Quả</TabTitle>
            <IconButton aria-label="Đóng thẻ"><X size={7} strokeWidth={3} /></IconButton>
          </BrowserTab>
          <NewTab aria-label="Thẻ mới"><Plus size={9} strokeWidth={3} /></NewTab>
        </TabStrip>
        <AddressRow>
          <NavButtons>
            <NavButton aria-label="Quay lại"><ArrowLeft size={10} strokeWidth={2.6} /></NavButton>
            <NavButton aria-label="Tiến"><ArrowRight size={10} strokeWidth={2.2} color="#a3a5a9" /></NavButton>
            <NavButton aria-label="Tải lại"><RotateCw size={9} strokeWidth={3} /></NavButton>
            <NavButton aria-label="Trang chủ"><House size={10} strokeWidth={2.6} /></NavButton>
          </NavButtons>
          <Omnibox>
            <FaLock size={6} />
            <UrlInput
              aria-label="Địa chỉ"
              defaultValue="https://www.facebook.com/adsmanager/manage/campaigns?act=304651143530225&columns=name%2Cerrors%2Cdelivery%2Cresults%2Creach%2Cfrequenc..."
            />
            <Star size={8} strokeWidth={2.6} />
          </Omnibox>
          <Extensions>
            <svg width="9" height="8" viewBox="0 0 9 8">
              <rect width="9" height="8" rx="1" fill="#a3a5aa" />
              <path d="M1.5 6L2.6 2.5L3.6 6M4.6 2.5V6M6 6V2.5H7.6V4.4H6" fill="none" stroke="#fff" strokeWidth="0.7" />
            </svg>
            <svg width="8" height="8" viewBox="0 0 8 8">
              <circle cx="4" cy="4" r="3.6" fill="#63666b" />
              <path d="M4 4V0.8A3.2 3.2 0 0 1 7.2 4Z" fill="#e4e5e7" />
            </svg>
            <VRule $color="#dcdde1" $h={10} />
            <svg width="10" height="11" viewBox="0 0 10 11">
              <circle cx="5" cy="5.5" r="4.9" fill="#d3e2cb" />
              <path d="M5 1.5A3 3 0 0 1 6.8 7L6 10H4L3.2 7A3 3 0 0 1 5 1.5Z" fill="#6cc63a" />
            </svg>
            <svg width="9" height="9" viewBox="0 0 9 9">
              <circle cx="4.5" cy="4.5" r="4.3" fill="#ea8a2e" />
              <path d="M4.5 2V5M4.5 6V7.2" stroke="#fff" strokeWidth="1.1" />
            </svg>
          </Extensions>
        </AddressRow>
        <Bookmarks aria-label="Dấu trang">
          <BookmarkList>
            {bookmarks.map(([icon, label], i) => (
              <Bookmark href="#" key={i}>{icon}{label}</Bookmark>
            ))}
          </BookmarkList>
          <BookmarkList>
            <VRule $color="#dcdde1" $h={9} />
            <Bookmark href="#"><Folder />Dấu trang Khác</Bookmark>
          </BookmarkList>
        </Bookmarks>

        <AppBar>
          <FbLogo />
          <Hamburger aria-label="Menu chính"><Lines /></Hamburger>
          <AppTitle>Trình quản lý quảng cáo</AppTitle>
          <SearchForm>
            <SearchInput placeholder="Tìm kiếm" aria-label="Tìm kiếm" />
            <SearchSubmit type="button" aria-label="Tìm"><Search size={8} strokeWidth={2.6} /></SearchSubmit>
          </SearchForm>
          <UserButton><Avatar />Trung <Caret /></UserButton>
          <VRule $color="#252f3c" $h={17} />
          <AppIcons>
            <FaBell size={10} />
            <FaFlag size={9} />
            <FaCog size={10} />
          </AppIcons>
          <VRule $color="#252f3c" $h={17} />
          <HelpCell><FaQuestionCircle size={8} /></HelpCell>
        </AppBar>

        <Work>
          <Main>
            <Bar>
              <SelectBox $w={124}>
                <Select aria-label="Tài khoản"><option>Mai Thanh (304651143530225)</option></Select>
                <Caret />
              </SelectBox>
              <BarGroup>
                <Updated>Thời gian cập nhập: vừa xong</Updated>
                <BoxButton aria-label="Làm mới"><RefreshCw size={9} strokeWidth={2} /></BoxButton>
                <BoxButton $w={49} disabled>Bỏ bản nháp</BoxButton>
                <BoxButton $w={59} disabled>Xem lại và đăng</BoxButton>
                <BoxButton $w={14} aria-label="Cài đặt"><FaCog size={6} /></BoxButton>
              </BarGroup>
            </Bar>
            <Bar $tint>
              <BarGroup>
                <BoxButton $tone="white" $w={53}><Search size={7} strokeWidth={3} />Tìm kiếm <SmallCaret /></BoxButton>
                <BoxButton $tone="white" $w={43}><FaFilter size={6} />Bộ lọc <SmallCaret /></BoxButton>
                <VRule $color="transparent" $h={1} />
                <BoxButton $tone="blue" aria-label="Thêm bộ lọc"><Plus size={7} strokeWidth={3} /></BoxButton>
                <Hint>Thêm bộ lọc để thu hẹp dữ liệu bạn xem.</Hint>
              </BarGroup>
              <SelectBox $w={120} $white>
                <Select aria-label="Khoảng thời gian"><option>Tháng này: 1 Tháng 6, 2019 – 2</option></Select>
                <Caret />
              </SelectBox>
            </Bar>
            <LevelTabs>
              <LevelTab><LevelButton><OverviewIcon />Tổng quan về tài khoản</LevelButton></LevelTab>
              <LevelTab $active>
                <LevelButton><CampaignIcon />Chiến dịch</LevelButton>
                <Pill>Đã chọn 2 <IconButton aria-label="Bỏ chọn"><CircleX /></IconButton></Pill>
              </LevelTab>
              <LevelTab><LevelButton><AdSetIcon />Nhóm quảng cáo đối với 2 ...</LevelButton></LevelTab>
              <LevelTab><LevelButton><AdIcon />Quảng cáo đối với 2 Chiến ...</LevelButton></LevelTab>
            </LevelTabs>
            <Panel>
              <Toolbar>
                <BarGroup>
                  <BoxButton $tone="green" $w={33}><Plus size={7} strokeWidth={4} />Tạo</BoxButton>
                  <Split>
                    <BoxButton $w={53}><CopyIcon />Sao chép</BoxButton>
                    <BoxButton $w={14} aria-label="Thêm cách sao chép"><Caret /></BoxButton>
                  </Split>
                  <Split>
                    <BoxButton $w={53}><FaPen size={7} />Chỉnh sửa</BoxButton>
                    <BoxButton $w={14} aria-label="Thêm cách chỉnh sửa"><Caret /></BoxButton>
                  </Split>
                  <BoxButton disabled aria-label="Dán"><PasteIcon /></BoxButton>
                  <Split>
                    <BoxButton $w={18} disabled aria-label="Hoàn tác"><UndoIcon /></BoxButton>
                    <DeleteSpot>
                      <BoxButton $w={18} aria-label="Xóa"><FaTrashAlt size={9} /></BoxButton>
                      <Tooltip role="tooltip">Xóa</Tooltip>
                      <Marker />
                      <Hand />
                    </DeleteSpot>
                    <BoxButton $w={16} aria-label="Xuất"><ExportIcon /></BoxButton>
                    <BoxButton $w={18} aria-label="Gắn thẻ"><FaTag size={8} /></BoxButton>
                  </Split>
                  <BoxButton $w={46}>Quy tắc <Caret /></BoxButton>
                </BarGroup>
                <BarGroup>
                  <SwitchLabel>Xem thiết lập <Switch type="checkbox" role="switch" /></SwitchLabel>
                  <SelectBox $w={108}>
                    Cột:
                    <Select><option>Hiệu quả và số lần nhấp</option></Select>
                    <Caret />
                  </SelectBox>
                  <SelectBox $w={70}>
                    <Select aria-label="Số liệu"><option>Số liệu chia nhỏ</option></Select>
                    <Caret />
                  </SelectBox>
                  <SelectBox $w={43} $open>
                    <Select aria-label="Báo cáo"><option>báo cáo</option></Select>
                    <Caret />
                  </SelectBox>
                </BarGroup>
              </Toolbar>

              <Grid>
                <colgroup>{columns.map((w, i) => <Col key={i} $w={w} />)}</colgroup>
                <thead>
                  <tr>
                    <Th><Check type="checkbox" aria-label="Chọn tất cả" /></Th>
                    <Th aria-label="Bật/tắt" />
                    <Th $left><HeadLine>Tên chiến dịch <SmallCaret /></HeadLine></Th>
                    <Th aria-label="Cảnh báo"><HeadLine><span /><FaExclamationTriangle size={7} color="#6a6d74" /><span /></HeadLine></Th>
                    <Th $left $blue><HeadLine>Phân phối <SmallCaret $up /></HeadLine></Th>
                    <Th>Kết quả</Th>
                    <Th>Số người tiếp cận được</Th>
                    <Th>Tần suất</Th>
                    <Th>Chi phí trên mỗi kết quả</Th>
                    <Th>Ngân sách</Th>
                    <Th>Số tiền đã chi tiêu</Th>
                    <Th>Kết thúc</Th>
                    <Th>Số lần hiển thị</Th>
                    <Th aria-hidden />
                  </tr>
                </thead>
                <tbody>
                  {campaigns.map((c, i) => (
                    <Row key={c.name} $kind={i === 0 ? "clip" : i % 2 ? "odd" : "even"} $selected={c.on}>
                      <td><Check type="checkbox" defaultChecked={c.on} aria-label={c.name} /></td>
                      <td><Switch type="checkbox" role="switch" aria-label={c.name} /></td>
                      <LeftCell><NameLink href="#">{c.name}</NameLink></LeftCell>
                      <td />
                      <LeftCell><State><Dot />Không hoạt động</State></LeftCell>
                      <td><Dash>—</Dash><Sub>{c.result}</Sub></td>
                      <td><Dash>—</Dash></td>
                      <td><Dash>—</Dash></td>
                      <td><Dash>—</Dash><Sub>{c.cost}</Sub></td>
                      <td>{c.budget}{c.budgetSub && <Sub>{c.budgetSub}</Sub>}</td>
                      <td>0 đ</td>
                      <td><Wrap>{c.end}</Wrap></td>
                      <td><Dash>—</Dash></td>
                      <td />
                    </Row>
                  ))}
                  <tr><Filler colSpan={columns.length} /></tr>
                </tbody>
                <tfoot>
                  <Row $kind="total">
                    <td />
                    <td />
                    <LeftCell>
                      <TotalName><Expand aria-label="Mở rộng"><Chevron /></Expand>Kết quả từ 7 chiến dịch <Info /></TotalName>
                    </LeftCell>
                    <td />
                    <td />
                    <td><Dash>—</Dash></td>
                    <td><Dash>—</Dash><Sub>Mọi người</Sub></td>
                    <td><Dash>—</Dash><Sub>Mỗi người</Sub></td>
                    <td><Dash>—</Dash></td>
                    <td />
                    <td><b>0 đ</b><Sub>Tổng chi tiêu</Sub></td>
                    <td />
                    <td><Dash>—</Dash><Sub>Tổng</Sub></td>
                    <td />
                  </Row>
                </tfoot>
              </Grid>
              <Scroll><Thumb /></Scroll>
            </Panel>
          </Main>
          <Side>
            <SideButton $dim aria-label="Thu gọn"><Collapse /></SideButton>
            <SideButton aria-label="Biểu đồ"><Bars /></SideButton>
            <SideButton aria-label="Chỉnh sửa"><FaPen size={9} /></SideButton>
            <SideButton aria-label="Lịch sử"><ClockIcon /></SideButton>
          </Side>
        </Work>
      </Window>

      <DockArea>
        <Dock>
          {dockGroups.map((group, g) => (
            <React.Fragment key={g}>
              {g > 0 && <DockRule />}
              {group.map((name) => (
                <DockSlot key={name} aria-label={name}>
                  <svg width="21" height="21" viewBox="0 0 20 20">{dockArt[name]}</svg>
                  <DockDot $on={running.includes(name)} />
                </DockSlot>
              ))}
            </React.Fragment>
          ))}
        </Dock>
      </DockArea>
    </Screen>
  );
}
